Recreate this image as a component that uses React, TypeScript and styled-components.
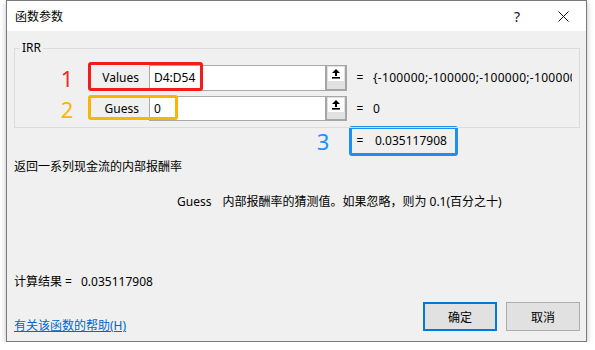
import React from "react";
import styled, { createGlobalStyle } from "styled-components";

const Global = createGlobalStyle`
  html, body { margin: 0; padding: 0; background: #ffffff; }
  body { font-family: "Noto Sans", "Noto Sans CJK SC", sans-serif; font-size: 12px; color: #000; }
`;

const Window = styled.div`
  margin-left: 6px;
  width: 581px;
  height: 342px;
  box-sizing: border-box;
  border: 1px solid #7a7a7a;
  background: #f0f0f0;
  display: flex;
  flex-direction: column;
  box-shadow: 0 2px 6px rgba(0, 0, 0, 0.25);
`;

const TitleBar = styled.div`
  height: 30px;
  background: #ffffff;
  display: flex;
  align-items: center;
  padding-left: 8px;
`;

const TitleText = styled.div`
  flex: 1;
  font-family: "Noto Sans CJK SC", sans-serif;
  font-size: 12px;
  line-height: 16px;
`;

const TitleButton = styled.div`
  width: 46px;
  height: 30px;
  display: flex;
  align-items: center;
  justify-content: center;
  font-size: 14px;
  color: #111;
`;

const Body = styled.div`
  flex: 1;
  display: flex;
  flex-direction: column;
  padding: 17px 6px 0 7px;
`;

const GroupBox = styled.div`
  position: relative;
  border: 1px solid #dcdcdc;
  padding: 16px 0 6px 42px;
  display: flex;
  flex-direction: column;
  gap: 5px;
`;

const Legend = styled.div`
  position: absolute;
  top: -9px;
  left: 5px;
  padding: 0 2px;
  background: #f0f0f0;
  font-size: 12px;
  line-height: 16px;
`;

const ArgRow = styled.div<{ $h: number }>`
  position: relative;
  display: flex;
  align-items: center;
  height: ${(p) => p.$h}px;
`;

const Num = styled.div<{ $color: string }>`
  width: 20px;
  text-align: center;
  font-family: "Noto Sans", sans-serif;
  font-size: 22px;
  line-height: 26px;
  color: ${(p) => p.$color};
`;

const Label = styled.div`
  margin-left: 11px;
  width: 61px;
  box-sizing: border-box;
  padding-right: 10px;
  text-align: right;
  line-height: 16px;
`;

const Mark = styled.div<{ $color: string; $w: number; $h: number; $top: number }>`
  position: absolute;
  left: 31px;
  top: ${(p) => p.$top}px;
  width: ${(p) => p.$w}px;
  height: ${(p) => p.$h}px;
  box-sizing: border-box;
  border: 3px solid ${(p) => p.$color};
  border-radius: 3px;
  pointer-events: none;
`;

const InputBox = styled.div`
  width: 198px;
  height: 100%;
  box-sizing: border-box;
  border: 1px solid #a9a9a9;
  background: #ffffff;
  display: flex;
`;

const InputText = styled.div`
  flex: 1;
  padding-left: 4px;
  display: flex;
  align-items: center;
  line-height: 16px;
`;

const RefButton = styled.div`
  width: 22px;
  box-sizing: border-box;
  border: 2px solid #a6a6a6;
  border-top-width: 1px;
  margin: -1px -1px -1px 0;
  background: #e1e1e1;
  display: flex;
  justify-content: center;
  padding-top: 1px;
`;

const Eq = styled.div<{ $w: number }>`
  width: ${(p) => p.$w}px;
  text-align: center;
  line-height: 16px;
`;

const Value = styled.div`
  width: 199px;
  overflow: hidden;
  white-space: nowrap;
  line-height: 16px;
  letter-spacing: 0.3px;
`;

const ResultRow = styled.div`
  display: flex;
  align-items: center;
  margin-top: -2px;
  padding-left: 299px;
  height: 30px;
`;

const ResultBox = styled.div`
  margin-left: 16px;
  width: 109px;
  height: 30px;
  box-sizing: border-box;
  border: 3px solid #1e8ff0;
  border-radius: 3px;
  display: flex;
  align-items: center;
`;

const ResultValue = styled.div`
  margin-left: 7px;
  line-height: 16px;
`;

const Text = styled.div<{ $mt: number; $pl?: number }>`
  margin-top: ${(p) => p.$mt}px;
  padding-left: ${(p) => p.$pl ?? 0}px;
  line-height: 16px;
  display: flex;
  white-space: nowrap;
`;

const Gap = styled.span<{ $w: number }>`
  display: inline-block;
  width: ${(p) => p.$w}px;
`;

const Footer = styled.div`
  margin-top: 12px;
  display: flex;
  align-items: flex-start;
`;

const HelpLink = styled.a`
  flex: 1;
  padding-top: 16px;
  line-height: 16px;
  color: #0066cc;
  text-decoration: underline;
  cursor: pointer;
`;

const Btn = styled.div<{ $primary?: boolean }>`
  width: 74px;
  height: 29px;
  box-sizing: border-box;
  margin-left: ${(p) => (p.$primary ? 0 : 9)}px;
  border: ${(p) => (p.$primary ? "2px solid #0078d7" : "1px solid #adadad")};
  background: #e1e1e1;
  display: flex;
  align-items: center;
  justify-content: center;
  font-family: "Noto Sans CJK SC", sans-serif;
  line-height: 16px;
`;

const CloseIcon = () => (
  <svg width="11" height="11" viewBox="0 0 11 11">
    <path d="M0.5 0.5 L10.5 10.5 M10.5 0.5 L0.5 10.5" stroke="#111" strokeWidth="1" />
  </svg>
);

const CollapseIcon = () => (
  <svg width="16" height="14" viewBox="0 0 16 14">
    <rect x="0" y="0" width="16" height="14" fill="#ffffff" />
    <path d="M8 2 L4 6 L7 6 L7 9 L9 9 L9 6 L12 6 Z" fill="#000" />
    <rect x="4" y="10" width="8" height="1.6" fill="#000" />
  </svg>
);

export default function App() {
  return (
    <>
      <Global />
      <Window>
        <TitleBar>
          <TitleText>函数参数</TitleText>
          <TitleButton>?</TitleButton>
          <TitleButton>
            <CloseIcon />
          </TitleButton>
        </TitleBar>
        <Body>
          <GroupBox>
            <Legend>IRR</Legend>
            <ArgRow $h={26}>
              <Num $color="#ee2a24">1</Num>
              <Label>Values</Label>
              <InputBox>
                <InputText>D4:D54</InputText>
                <RefButton>
                  <CollapseIcon />
                </RefButton>
              </InputBox>
              <Eq $w={26}>=</Eq>
              <Value>{"{-100000;-100000;-100000;-100000;-100000}"}</Value>
              <Mark $color="#f21c1c" $w={115} $h={29} $top={-3} />
            </ArgRow>
            <ArgRow $h={25}>
              <Num $color="#fab400">2</Num>
              <Label>Guess</Label>
              <InputBox>
                <InputText>0</InputText>
                <RefButton>
                  <CollapseIcon />
                </RefButton>
              </InputBox>
              <Eq $w={26}>=</Eq>
              <Value>0</Value>
              <Mark $color="#fbb500" $w={90} $h={25} $top={-1} />
            </ArgRow>
          </GroupBox>
          <ResultRow>
            <Num $color="#1e90ff">3</Num>
            <ResultBox>
              <Eq $w={16}>=</Eq>
              <ResultValue>0.035117908</ResultValue>
            </ResultBox>
          </ResultRow>
          <Text $mt={3}>返回一系列现金流的内部报酬率</Text>
          <Text $mt={19} $pl={163}>
            Guess<Gap $w={11} />内部报酬率的猜测值。如果忽略，则为 0.1(百分之十)
          </Text>
          <Text $mt={64}>
            计算结果 =<Gap $w={9} />0.035117908
          </Text>
          <Footer>
            <HelpLink>有关该函数的帮助(H)</HelpLink>
            <Btn $primary>确定</Btn>
            <Btn>取消</Btn>
          </Footer>
        </Body>
      </Window>
    </>
  );
}
